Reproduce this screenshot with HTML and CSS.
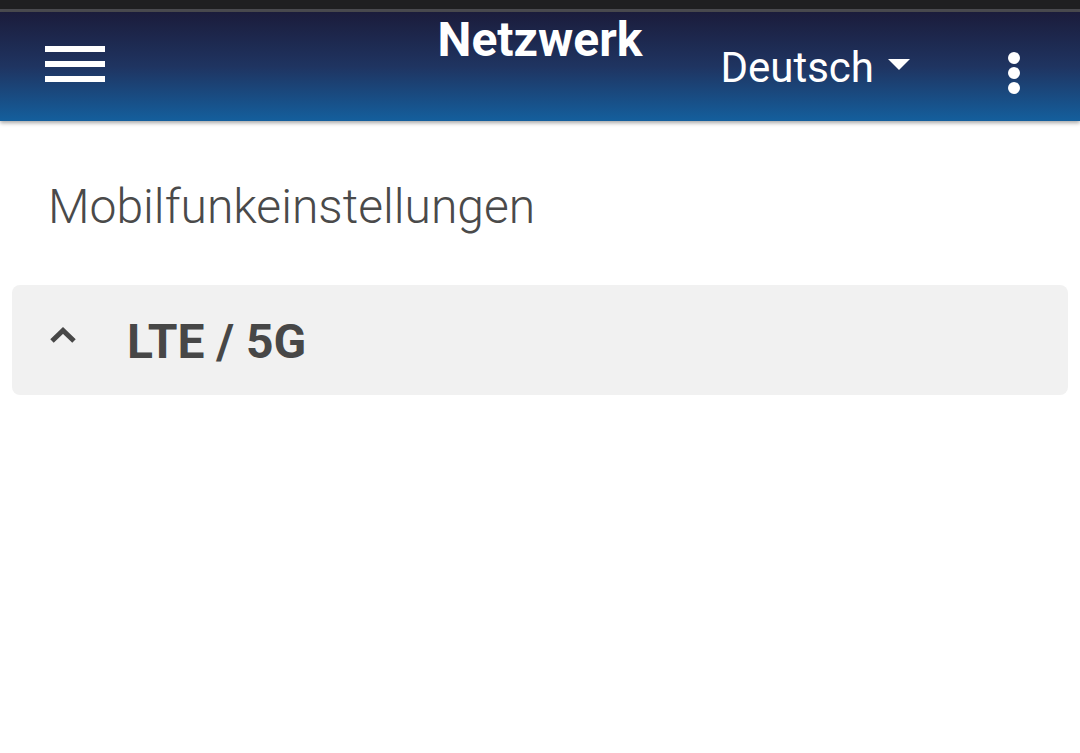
FILE: index.html
```html
<!DOCTYPE html>
<html>
<head>
    <meta charset="utf-8">
    <title>Netzwerk</title>
    <link rel="stylesheet" href="styles.css">
</head>
<body>
<div class="statusbar"></div>
<header class="topbar">
    <div class="topbar-left">
        <button class="menu-btn" aria-label="Menü">
            <span></span><span></span><span></span>
        </button>
    </div>
    <h1 class="page-title">Netzwerk</h1>
    <div class="topbar-right">
        <div class="lang">
            <span class="lang-name">Deutsch</span>
            <span class="lang-caret"></span>
        </div>
        <button class="more-btn" aria-label="Mehr">
            <span></span><span></span><span></span>
        </button>
    </div>
</header>

<main class="content">
    <h2 class="section-title">Mobilfunkeinstellungen</h2>
    <div class="panel">
        <div class="panel-head">
            <svg class="chevron" width="28" height="18" viewBox="0 0 28 18">
                <polyline points="3,15 14,4.5 25,15" fill="none" stroke="#474747" stroke-width="5"/>
            </svg>
            <span class="panel-title">LTE / 5G</span>
        </div>
    </div>
</main>
</body>
</html>
```

FILE: styles.css
```css
body {
    margin: 0;
    font-family: Roboto, "Noto Sans", sans-serif;
    background-color: #fff;
}

.statusbar {
    height: 9px;
    background-color: #1f1f21;
    border-bottom: 3px solid #4b4b50;
}

.topbar {
    display: grid;
    grid-template-columns: 1fr auto 1fr;
    align-items: start;
    height: 109px;
    background: linear-gradient(to bottom, #1b1c3b 0%, #1f3461 50%, #145f9d 100%);
    box-shadow: 0 2px 4px rgba(0, 0, 0, 0.35);
    color: #fff;
    position: relative;
}

.topbar-left {
    padding-left: 45px;
}

.menu-btn {
    display: flex;
    flex-direction: column;
    gap: 9px;
    width: 60px;
    margin-top: 34px;
    padding: 0;
    background: none;
    border: none;
}

.menu-btn span {
    display: block;
    height: 6px;
    background-color: #fff;
}

.page-title {
    margin: 4px 0 0;
    font-size: 48px;
    font-weight: 700;
    line-height: 1;
    text-align: center;
}

.topbar-right {
    display: flex;
    justify-content: flex-end;
    align-items: flex-start;
    padding-right: 60px;
}

.lang {
    display: flex;
    align-items: center;
    gap: 14px;
    margin-top: 35px;
}

.lang-name {
    font-size: 42px;
    line-height: 1;
}

.lang-caret {
    width: 0;
    height: 0;
    margin-top: -8px;
    border-left: 11px solid transparent;
    border-right: 11px solid transparent;
    border-top: 11px solid #fff;
}

.more-btn {
    display: flex;
    flex-direction: column;
    gap: 3px;
    margin: 40px 0 0 98px;
    padding: 0;
    background: none;
    border: none;
}

.more-btn span {
    display: block;
    width: 12px;
    height: 12px;
    border-radius: 50%;
    background-color: #fff;
}

.content {
    padding: 0 12px;
}

.section-title {
    margin: 62px 0 0 36px;
    font-size: 48px;
    font-weight: 300;
    line-height: 1;
    color: #4a4a4a;
}

.panel {
    margin-top: 54px;
    background-color: #f1f1f1;
    border-radius: 8px;
}

.panel-head {
    display: flex;
    align-items: center;
    height: 110px;
    padding-left: 37px;
}

.chevron {
    margin-top: -10px;
}

.panel-title {
    margin-left: 50px;
    margin-top: 4px;
    font-size: 48px;
    font-weight: 700;
    line-height: 1;
    color: #474747;
}
```
